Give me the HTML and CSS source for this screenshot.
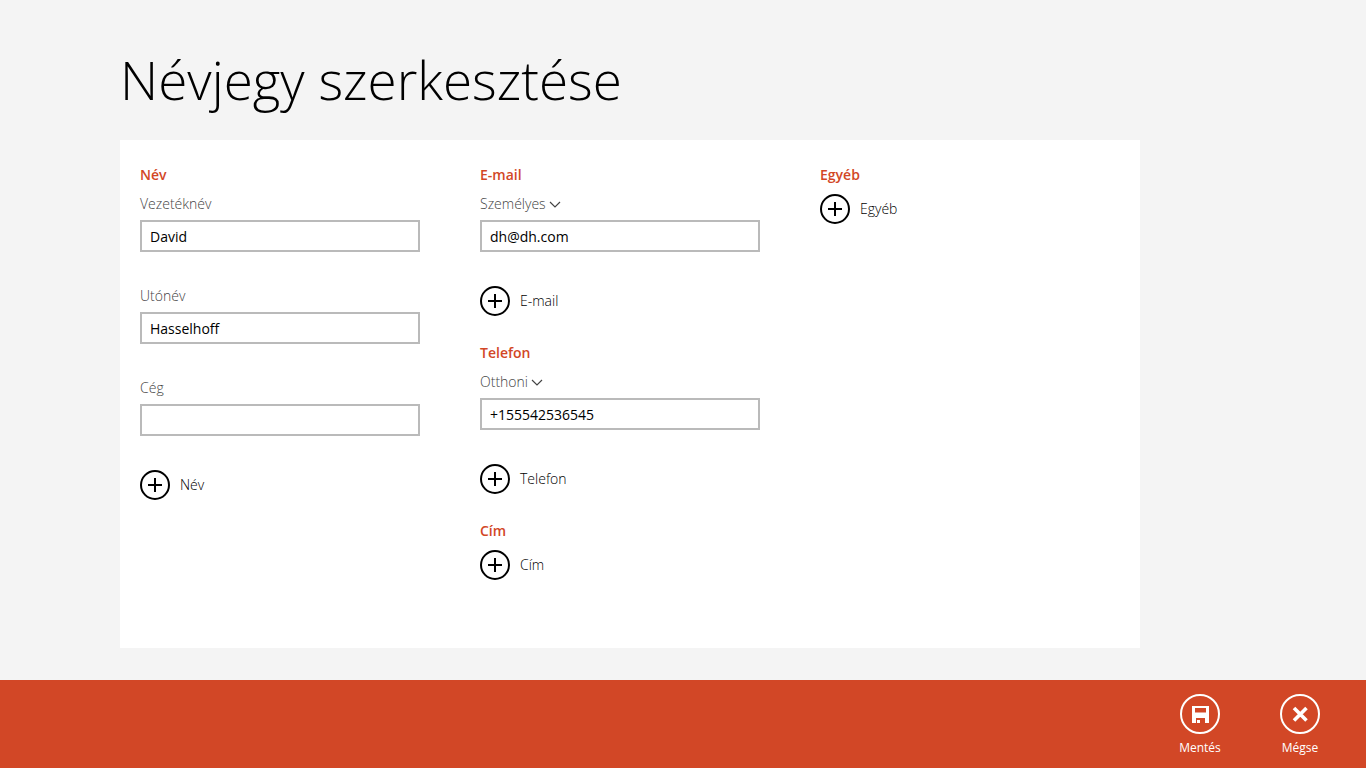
FILE: index.html
```html
<!DOCTYPE html>
<html lang="hu">
<head>
<meta charset="utf-8">
<title>Névjegy szerkesztése</title>
<meta name="viewport" content="width=device-width, initial-scale=1">
<link rel="stylesheet" href="styles.css">
</head>
<body>

<svg class="sprite" aria-hidden="true">
	<symbol id="plus" viewBox="0 0 30 30">
		<circle cx="15" cy="15" r="14" fill="none" stroke="currentColor" stroke-width="2"/>
		<path d="M8 15H22M15 8V22" fill="none" stroke="currentColor" stroke-width="2"/>
	</symbol>
	<symbol id="chevron" viewBox="0 0 12 8">
		<path d="M1 2L6 7L11 2" fill="none" stroke="currentColor" stroke-width="1.2"/>
	</symbol>
</svg>

<header class="header">
	<h1 class="title">Névjegy szerkesztése</h1>
</header>

<form class="card" id="contact">
	<div class="column">
		<section class="group">
			<h2 class="group-title">Név</h2>
			<div class="field">
				<label class="label" for="lastname">Vezetéknév</label>
				<input class="input" id="lastname" type="text" value="David">
			</div>
			<div class="field">
				<label class="label" for="firstname">Utónév</label>
				<input class="input" id="firstname" type="text" value="Hasselhoff">
			</div>
			<div class="field">
				<label class="label" for="company">Cég</label>
				<input class="input" id="company" type="text">
			</div>
			<button class="add" type="button"><svg class="add-icon"><use href="#plus"/></svg>Név</button>
		</section>
	</div>

	<div class="column">
		<section class="group">
			<h2 class="group-title"><label for="email">E-mail</label></h2>
			<div class="field">
				<div class="kind">
					<select class="kind-select" aria-label="E-mail">
						<option>Személyes</option>
					</select>
					<svg class="kind-icon"><use href="#chevron"/></svg>
				</div>
				<input class="input" id="email" type="email" value="dh@dh.com">
			</div>
			<button class="add" type="button"><svg class="add-icon"><use href="#plus"/></svg>E-mail</button>
		</section>
		<section class="group">
			<h2 class="group-title"><label for="phone">Telefon</label></h2>
			<div class="field">
				<div class="kind">
					<select class="kind-select" aria-label="Telefon">
						<option>Otthoni</option>
					</select>
					<svg class="kind-icon"><use href="#chevron"/></svg>
				</div>
				<input class="input" id="phone" type="tel" value="+155542536545">
			</div>
			<button class="add" type="button"><svg class="add-icon"><use href="#plus"/></svg>Telefon</button>
		</section>
		<section class="group">
			<h2 class="group-title">Cím</h2>
			<button class="add" type="button"><svg class="add-icon"><use href="#plus"/></svg>Cím</button>
		</section>
	</div>

	<div class="column">
		<section class="group">
			<h2 class="group-title">Egyéb</h2>
			<button class="add" type="button"><svg class="add-icon"><use href="#plus"/></svg>Egyéb</button>
		</section>
	</div>
</form>

<footer class="appbar">
	<button class="command" type="submit" form="contact">
		<svg class="command-icon" viewBox="0 0 40 40">
			<circle cx="20" cy="20" r="19" fill="none" stroke="#fff" stroke-width="2"/>
			<path d="M12 12H29V29H25V24H16V29H12ZM15 14V18.500H26V14ZM17 26H20V29H17Z" fill="#fff" fill-rule="evenodd"/>
		</svg>
		Mentés
	</button>
	<button class="command" type="button">
		<svg class="command-icon" viewBox="0 0 40 40">
			<circle cx="20" cy="20" r="19" fill="none" stroke="#fff" stroke-width="2"/>
			<path d="M14 14L26.500 26.500M26.500 14L14 26.500" fill="none" stroke="#fff" stroke-width="3.600"/>
		</svg>
		Mégse
	</button>
</footer>

</body>
</html>
```

FILE: styles.css
```css
* {
	box-sizing: border-box;
}

body {
	display: flex;
	flex-direction: column;
	min-height: 100vh;
	margin: 0;
	background: #f4f4f4;
	color: #000;
	font-family: "Open Sans", "Noto Sans", sans-serif;
	font-size: 14px;
	line-height: 20px;
}

button, input, select {
	font: inherit;
	color: inherit;
}

.sprite {
	display: none;
}

.header {
	padding: 44px 120px 24px;
}

.title {
	margin: 0;
	font-size: 53px;
	font-weight: 300;
	line-height: 72px;
}

.card {
	flex: 1;
	display: grid;
	grid-template-columns: repeat(3, minmax(0, 1fr));
	gap: 60px;
	max-width: 1020px;
	margin: 0 120px 32px;
	padding: 25px 40px 25px 20px;
	background: #fff;
}

.column {
	display: flex;
	flex-direction: column;
	gap: 27px;
}

.group-title {
	margin: 0 0 9px;
	color: #d24726;
	font-size: 14px;
	font-weight: 600;
	line-height: 20px;
}

.field {
	display: flex;
	flex-direction: column;
	gap: 6px;
	margin-bottom: 34px;
}

.label, .kind {
	color: #444;
	font-weight: 300;
}

.kind {
	display: flex;
	align-items: center;
	gap: 3px;
}

.kind-select {
	appearance: none;
	field-sizing: content;
	height: 20px;
	padding: 0;
	border: 0;
	background: none;
}

.kind-icon {
	width: 12px;
	height: 8px;
}

.input {
	width: 100%;
	height: 32px;
	padding: 0 8px;
	border: 2px solid #bababa;
	background: #fff;
}

.add {
	display: flex;
	align-items: center;
	gap: 10px;
	padding: 0;
	border: 0;
	background: none;
	font-weight: 300;
}

.add-icon {
	width: 30px;
	height: 30px;
}

.appbar {
	display: flex;
	justify-content: flex-end;
	height: 88px;
	padding: 14px 16px 0;
	background: #d24726;
}

.command {
	display: flex;
	flex-direction: column;
	align-items: center;
	gap: 4px;
	width: 100px;
	padding: 0;
	border: 0;
	background: none;
	color: #fff;
	font-size: 12px;
}

.command-icon {
	width: 40px;
	height: 40px;
}
```
